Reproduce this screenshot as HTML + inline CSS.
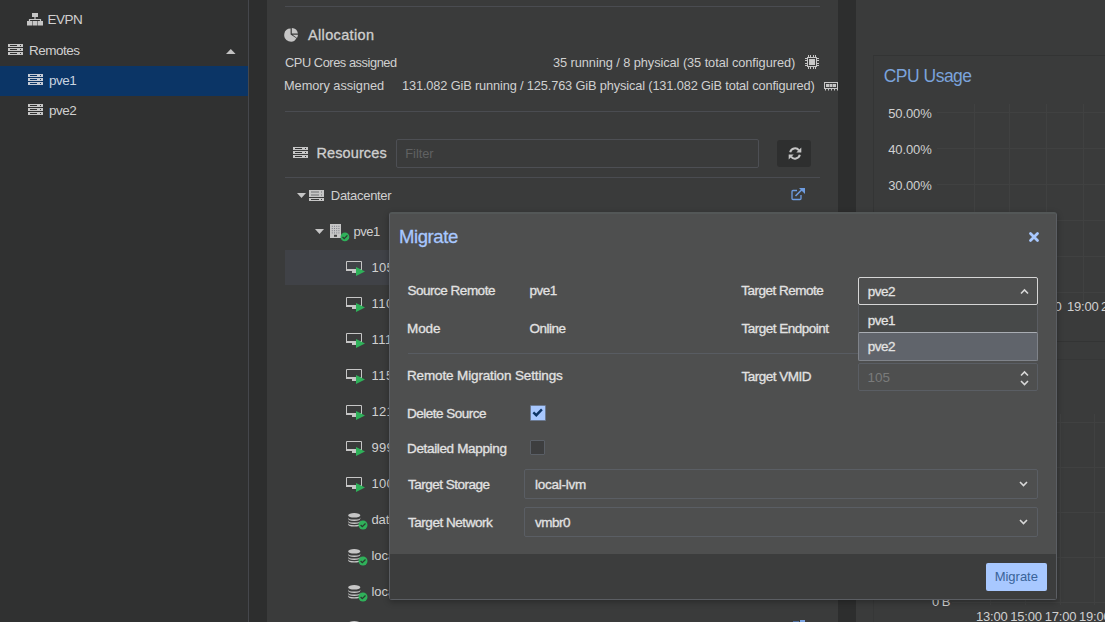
<!DOCTYPE html>
<html><head><meta charset="utf-8">
<style>
*{box-sizing:border-box;margin:0;padding:0}
html,body{width:1105px;height:622px;overflow:hidden;background:#3a3b3b;font-family:"Liberation Sans",sans-serif;position:relative}
.bx{position:absolute}
.ic{position:absolute;overflow:visible}
.tx{position:absolute;white-space:nowrap;line-height:1}
</style></head><body>
<div class="bx" style="left:0px;top:0px;width:248px;height:622px;background:#303131"></div>
<div class="bx" style="left:248px;top:0px;width:1px;height:622px;background:#45474c"></div>
<div class="bx" style="left:249px;top:0px;width:18px;height:622px;background:#2d2e2e"></div>
<div class="bx" style="left:267px;top:0px;width:571px;height:622px;background:#3a3b3b"></div>
<div class="bx" style="left:838px;top:0px;width:18px;height:622px;background:#2d2e2e"></div>
<div class="bx" style="left:856px;top:0px;width:249px;height:622px;background:#3a3b3b"></div>
<div class="bx" style="left:0px;top:66px;width:248px;height:30px;background:#0b3566"></div>
<svg class="ic" style="left:27px;top:12px" width="16" height="14" viewBox="0 0 16 14"><rect x="5" y="1" width="6" height="4" fill="#c6c6c6"/><path d="M8 5 V7.5 M2.5 9 V7.5 H13.5 V9" stroke="#c6c6c6" stroke-width="1.2" fill="none"/><rect x="0" y="9" width="5" height="4.5" fill="#c6c6c6"/><rect x="5.5" y="9" width="5" height="4.5" fill="#c6c6c6"/><rect x="11" y="9" width="5" height="4.5" fill="#c6c6c6"/></svg>
<svg class="ic" style="left:8px;top:44px" width="15" height="11" viewBox="0 0 15 11"><rect x="0" y="0" width="15" height="3" fill="#c6c6c6"/><rect x="2" y="1" width="7" height="1" fill="#303131"/><rect x="12" y="1" width="1" height="1" fill="#303131"/><rect x="0" y="4" width="15" height="3" fill="#c6c6c6"/><rect x="2" y="5" width="7" height="1" fill="#303131"/><rect x="12" y="5" width="1" height="1" fill="#303131"/><rect x="0" y="8" width="15" height="3" fill="#c6c6c6"/><rect x="2" y="9" width="7" height="1" fill="#303131"/><rect x="12" y="9" width="1" height="1" fill="#303131"/></svg>
<svg class="ic" style="left:27.5px;top:74px" width="15" height="11" viewBox="0 0 15 11"><rect x="0" y="0" width="15" height="3" fill="#c6ccd6"/><rect x="2" y="1" width="7" height="1" fill="#0b3566"/><rect x="12" y="1" width="1" height="1" fill="#0b3566"/><rect x="0" y="4" width="15" height="3" fill="#c6ccd6"/><rect x="2" y="5" width="7" height="1" fill="#0b3566"/><rect x="12" y="5" width="1" height="1" fill="#0b3566"/><rect x="0" y="8" width="15" height="3" fill="#c6ccd6"/><rect x="2" y="9" width="7" height="1" fill="#0b3566"/><rect x="12" y="9" width="1" height="1" fill="#0b3566"/></svg>
<svg class="ic" style="left:27.5px;top:104px" width="15" height="11" viewBox="0 0 15 11"><rect x="0" y="0" width="15" height="3" fill="#c6c6c6"/><rect x="2" y="1" width="7" height="1" fill="#303131"/><rect x="12" y="1" width="1" height="1" fill="#303131"/><rect x="0" y="4" width="15" height="3" fill="#c6c6c6"/><rect x="2" y="5" width="7" height="1" fill="#303131"/><rect x="12" y="5" width="1" height="1" fill="#303131"/><rect x="0" y="8" width="15" height="3" fill="#c6c6c6"/><rect x="2" y="9" width="7" height="1" fill="#303131"/><rect x="12" y="9" width="1" height="1" fill="#303131"/></svg>
<svg class="ic" style="left:226px;top:49px" width="10" height="5" viewBox="0 0 10 5"><path d="M0 5 L4.8 0 L9.6 5 Z" fill="#c2c2c2"/></svg>
<div class="bx" style="left:285px;top:6px;width:535px;height:1px;background:#4a4c51"></div>
<svg class="ic" style="left:284px;top:27.5px" width="15" height="14" viewBox="0 0 15 14"><path d="M6.6 0.6 A6.5 6.5 0 1 0 12.4 10.2 L6.6 6.5 Z" fill="#c6c6c6"/><path d="M7.8 0 A6.5 6.5 0 0 1 13.9 5.6 L7.8 5.6 Z" fill="#c6c6c6"/><path d="M8.6 6.8 L14 6.8 A6.5 6.5 0 0 1 13.0 9.9 Z" fill="#c6c6c6"/></svg>
<svg class="ic" style="left:805px;top:55px" width="14" height="14" viewBox="0 0 14 14"><rect x="2.5" y="2.5" width="9" height="9" stroke="#c6c6c6" stroke-width="1" fill="none"/><rect x="4" y="4" width="6" height="6" fill="#c6c6c6"/><rect x="3.0" y="0" width="1" height="2" fill="#c6c6c6"/><rect x="3.0" y="12" width="1" height="2" fill="#c6c6c6"/><rect x="0" y="3.0" width="2" height="1" fill="#c6c6c6"/><rect x="12" y="3.0" width="2" height="1" fill="#c6c6c6"/><rect x="5.0" y="0" width="1" height="2" fill="#c6c6c6"/><rect x="5.0" y="12" width="1" height="2" fill="#c6c6c6"/><rect x="0" y="5.0" width="2" height="1" fill="#c6c6c6"/><rect x="12" y="5.0" width="2" height="1" fill="#c6c6c6"/><rect x="8.0" y="0" width="1" height="2" fill="#c6c6c6"/><rect x="8.0" y="12" width="1" height="2" fill="#c6c6c6"/><rect x="0" y="8.0" width="2" height="1" fill="#c6c6c6"/><rect x="12" y="8.0" width="2" height="1" fill="#c6c6c6"/><rect x="10.0" y="0" width="1" height="2" fill="#c6c6c6"/><rect x="10.0" y="12" width="1" height="2" fill="#c6c6c6"/><rect x="0" y="10.0" width="2" height="1" fill="#c6c6c6"/><rect x="12" y="10.0" width="2" height="1" fill="#c6c6c6"/></svg>
<svg class="ic" style="left:824px;top:82px" width="15" height="9" viewBox="0 0 15 9"><rect x="0.5" y="0.5" width="13" height="6" stroke="#c6c6c6" stroke-width="1" fill="none"/><rect x="2" y="2" width="3" height="3" fill="#c6c6c6"/><rect x="5.5" y="2" width="3" height="3" fill="#c6c6c6"/><rect x="9" y="2" width="3" height="3" fill="#c6c6c6"/><rect x="1" y="7" width="1" height="1.5" fill="#c6c6c6"/><rect x="4" y="7" width="1" height="1.5" fill="#c6c6c6"/><rect x="7" y="7" width="1" height="1.5" fill="#c6c6c6"/><rect x="10" y="7" width="1" height="1.5" fill="#c6c6c6"/><rect x="13" y="7" width="1" height="1.5" fill="#c6c6c6"/></svg>
<div class="bx" style="left:285px;top:111px;width:535px;height:1px;background:#4a4c51"></div>
<svg class="ic" style="left:293px;top:147px" width="15" height="11" viewBox="0 0 15 11"><rect x="0" y="0" width="15" height="3" fill="#c6c6c6"/><rect x="2" y="1" width="7" height="1" fill="#303131"/><rect x="12" y="1" width="1" height="1" fill="#303131"/><rect x="0" y="4" width="15" height="3" fill="#c6c6c6"/><rect x="2" y="5" width="7" height="1" fill="#303131"/><rect x="12" y="5" width="1" height="1" fill="#303131"/><rect x="0" y="8" width="15" height="3" fill="#c6c6c6"/><rect x="2" y="9" width="7" height="1" fill="#303131"/><rect x="12" y="9" width="1" height="1" fill="#303131"/></svg>
<div class="bx" style="left:396px;top:139px;width:363px;height:29px;border:1px solid #4d4f54;border-radius:2px;background:#3a3b3b"></div>
<div class="bx" style="left:777px;top:140px;width:34px;height:27px;background:#2e2f2f;border-radius:3px"></div>
<svg class="ic" style="left:787.5px;top:147px" width="14" height="13" viewBox="0 0 14 13"><path d="M2.2 5.2 A5 5 0 0 1 11 3.3" stroke="#c6c6c6" stroke-width="2" fill="none"/><path d="M13.3 0.5 V5.5 H8.3 Z" fill="#c6c6c6"/><path d="M11.8 7.8 A5 5 0 0 1 3 9.7" stroke="#c6c6c6" stroke-width="2" fill="none"/><path d="M0.7 12.5 V7.5 H5.7 Z" fill="#c6c6c6"/></svg>
<div class="bx" style="left:285px;top:177px;width:535px;height:1px;background:#4a4c51"></div>
<svg class="ic" style="left:297px;top:193px" width="9" height="5" viewBox="0 0 9 5"><path d="M0 0 H9 L4.5 5 Z" fill="#c6c6c6"/></svg>
<svg class="ic" style="left:309px;top:189.5px" width="15" height="11" viewBox="0 0 15 11"><rect x="0" y="0" width="15" height="7" fill="#c6c6c6"/><rect x="2" y="1.5" width="8" height="1" fill="#6d6e70"/><rect x="2" y="4.5" width="8" height="1" fill="#6d6e70"/><rect x="12" y="1.5" width="1" height="1" fill="#6d6e70"/><rect x="12" y="4.5" width="1" height="1" fill="#6d6e70"/><rect x="0" y="8" width="15" height="3" fill="#c6c6c6"/><rect x="2" y="9" width="8" height="1" fill="#3a3b3b"/><rect x="12" y="9" width="1" height="1" fill="#3a3b3b"/></svg>
<svg class="ic" style="left:791px;top:188px" width="14" height="13" viewBox="0 0 14 13"><path d="M6 2.5 H2 Q1 2.5 1 3.5 V10.5 Q1 11.5 2 11.5 H9 Q10 11.5 10 10.5 V7" stroke="#6e9ce0" stroke-width="1.3" fill="none"/><path d="M4.5 8 L11 1.5" stroke="#6e9ce0" stroke-width="1.6"/><path d="M8 0 H14 V6 Z" fill="#6e9ce0"/></svg>
<svg class="ic" style="left:315px;top:229px" width="9" height="5" viewBox="0 0 9 5"><path d="M0 0 H9 L4.5 5 Z" fill="#c6c6c6"/></svg>
<svg class="ic" style="left:330px;top:224px" width="11" height="14" viewBox="0 0 11 14"><rect x="0" y="0" width="11" height="14" fill="#c6c6c6"/><rect x="1.8" y="1.8" width="1" height="1" fill="#7a7c85"/><rect x="4.0" y="1.8" width="1" height="1" fill="#7a7c85"/><rect x="6.2" y="1.8" width="1" height="1" fill="#7a7c85"/><rect x="8.4" y="1.8" width="1" height="1" fill="#7a7c85"/><rect x="1.8" y="4.0" width="1" height="1" fill="#7a7c85"/><rect x="4.0" y="4.0" width="1" height="1" fill="#7a7c85"/><rect x="6.2" y="4.0" width="1" height="1" fill="#7a7c85"/><rect x="8.4" y="4.0" width="1" height="1" fill="#7a7c85"/><rect x="1.8" y="6.2" width="1" height="1" fill="#7a7c85"/><rect x="4.0" y="6.2" width="1" height="1" fill="#7a7c85"/><rect x="6.2" y="6.2" width="1" height="1" fill="#7a7c85"/><rect x="8.4" y="6.2" width="1" height="1" fill="#7a7c85"/><rect x="1.8" y="8.4" width="1" height="1" fill="#7a7c85"/><rect x="4.0" y="8.4" width="1" height="1" fill="#7a7c85"/><rect x="6.2" y="8.4" width="1" height="1" fill="#7a7c85"/><rect x="8.4" y="8.4" width="1" height="1" fill="#7a7c85"/><rect x="4" y="10.8" width="3" height="2" fill="#444"/></svg>
<svg class="ic" style="left:339.70000000000005px;top:231.5px" width="9.8" height="9.8" viewBox="-4.9 -4.9 9.8 9.8"><circle cx="0" cy="0" r="4.4" fill="#2fb15a"/><path d="M-2.4 0 L-0.7 1.7 L2.5 -1.5" stroke="#2b3b30" stroke-width="1.3" fill="none"/></svg>
<div class="bx" style="left:285px;top:250px;width:104px;height:35px;background:#404247"></div>
<svg class="ic" style="left:346px;top:260px" width="20" height="17" viewBox="0 0 20 17"><path d="M0.5 1.5 H15.5 V10.5 H0.5 Z" stroke="#c6c6c6" stroke-width="1" fill="none"/><rect x="0" y="9" width="16" height="2" fill="#c6c6c6"/><rect x="6" y="11" width="4" height="2" fill="#c6c6c6"/><path d="M10 7 L19 11.5 L10 16 Z" fill="#2fb15a"/></svg>
<svg class="ic" style="left:346px;top:296px" width="20" height="17" viewBox="0 0 20 17"><path d="M0.5 1.5 H15.5 V10.5 H0.5 Z" stroke="#c6c6c6" stroke-width="1" fill="none"/><rect x="0" y="9" width="16" height="2" fill="#c6c6c6"/><rect x="6" y="11" width="4" height="2" fill="#c6c6c6"/><path d="M10 7 L19 11.5 L10 16 Z" fill="#2fb15a"/></svg>
<svg class="ic" style="left:346px;top:332px" width="20" height="17" viewBox="0 0 20 17"><path d="M0.5 1.5 H15.5 V10.5 H0.5 Z" stroke="#c6c6c6" stroke-width="1" fill="none"/><rect x="0" y="9" width="16" height="2" fill="#c6c6c6"/><rect x="6" y="11" width="4" height="2" fill="#c6c6c6"/><path d="M10 7 L19 11.5 L10 16 Z" fill="#2fb15a"/></svg>
<svg class="ic" style="left:346px;top:368px" width="20" height="17" viewBox="0 0 20 17"><path d="M0.5 1.5 H15.5 V10.5 H0.5 Z" stroke="#c6c6c6" stroke-width="1" fill="none"/><rect x="0" y="9" width="16" height="2" fill="#c6c6c6"/><rect x="6" y="11" width="4" height="2" fill="#c6c6c6"/><path d="M10 7 L19 11.5 L10 16 Z" fill="#2fb15a"/></svg>
<svg class="ic" style="left:346px;top:404px" width="20" height="17" viewBox="0 0 20 17"><path d="M0.5 1.5 H15.5 V10.5 H0.5 Z" stroke="#c6c6c6" stroke-width="1" fill="none"/><rect x="0" y="9" width="16" height="2" fill="#c6c6c6"/><rect x="6" y="11" width="4" height="2" fill="#c6c6c6"/><path d="M10 7 L19 11.5 L10 16 Z" fill="#2fb15a"/></svg>
<svg class="ic" style="left:346px;top:440px" width="20" height="17" viewBox="0 0 20 17"><path d="M0.5 1.5 H15.5 V10.5 H0.5 Z" stroke="#c6c6c6" stroke-width="1" fill="none"/><rect x="0" y="9" width="16" height="2" fill="#c6c6c6"/><rect x="6" y="11" width="4" height="2" fill="#c6c6c6"/><path d="M10 7 L19 11.5 L10 16 Z" fill="#2fb15a"/></svg>
<svg class="ic" style="left:346px;top:476px" width="20" height="17" viewBox="0 0 20 17"><path d="M0.5 1.5 H15.5 V10.5 H0.5 Z" stroke="#c6c6c6" stroke-width="1" fill="none"/><rect x="0" y="9" width="16" height="2" fill="#c6c6c6"/><rect x="6" y="11" width="4" height="2" fill="#c6c6c6"/><path d="M10 7 L19 11.5 L10 16 Z" fill="#2fb15a"/></svg>
<svg class="ic" style="left:348px;top:512.5px" width="13" height="14" viewBox="0 0 13 14"><ellipse cx="6.25" cy="2.3" rx="6.1" ry="2.3" fill="#c6c6c6"/><path d="M0.15 4.3999999999999995 Q0.15 6.6 6.25 6.6 Q12.35 6.6 12.35 4.3999999999999995 V5.6 Q12.35 8.0 6.25 8.0 Q0.15 8.0 0.15 5.6 Z" fill="#c6c6c6"/><path d="M0.15 7.3999999999999995 Q0.15 9.6 6.25 9.6 Q12.35 9.6 12.35 7.3999999999999995 V8.6 Q12.35 11.0 6.25 11.0 Q0.15 11.0 0.15 8.6 Z" fill="#c6c6c6"/><path d="M0.15 10.0 Q0.15 12.2 6.25 12.2 Q12.35 12.2 12.35 10.0 V11.2 Q12.35 13.6 6.25 13.6 Q0.15 13.6 0.15 11.2 Z" fill="#c6c6c6"/></svg>
<svg class="ic" style="left:357.5px;top:519.5px" width="10.0" height="10.0" viewBox="-5.0 -5.0 10.0 10.0"><circle cx="0" cy="0" r="4.5" fill="#2fb15a"/><path d="M-2.4 0 L-0.7 1.7 L2.5 -1.5" stroke="#2b3b30" stroke-width="1.3" fill="none"/></svg>
<svg class="ic" style="left:348px;top:548.5px" width="13" height="14" viewBox="0 0 13 14"><ellipse cx="6.25" cy="2.3" rx="6.1" ry="2.3" fill="#c6c6c6"/><path d="M0.15 4.3999999999999995 Q0.15 6.6 6.25 6.6 Q12.35 6.6 12.35 4.3999999999999995 V5.6 Q12.35 8.0 6.25 8.0 Q0.15 8.0 0.15 5.6 Z" fill="#c6c6c6"/><path d="M0.15 7.3999999999999995 Q0.15 9.6 6.25 9.6 Q12.35 9.6 12.35 7.3999999999999995 V8.6 Q12.35 11.0 6.25 11.0 Q0.15 11.0 0.15 8.6 Z" fill="#c6c6c6"/><path d="M0.15 10.0 Q0.15 12.2 6.25 12.2 Q12.35 12.2 12.35 10.0 V11.2 Q12.35 13.6 6.25 13.6 Q0.15 13.6 0.15 11.2 Z" fill="#c6c6c6"/></svg>
<svg class="ic" style="left:357.5px;top:555.5px" width="10.0" height="10.0" viewBox="-5.0 -5.0 10.0 10.0"><circle cx="0" cy="0" r="4.5" fill="#2fb15a"/><path d="M-2.4 0 L-0.7 1.7 L2.5 -1.5" stroke="#2b3b30" stroke-width="1.3" fill="none"/></svg>
<svg class="ic" style="left:348px;top:584.5px" width="13" height="14" viewBox="0 0 13 14"><ellipse cx="6.25" cy="2.3" rx="6.1" ry="2.3" fill="#c6c6c6"/><path d="M0.15 4.3999999999999995 Q0.15 6.6 6.25 6.6 Q12.35 6.6 12.35 4.3999999999999995 V5.6 Q12.35 8.0 6.25 8.0 Q0.15 8.0 0.15 5.6 Z" fill="#c6c6c6"/><path d="M0.15 7.3999999999999995 Q0.15 9.6 6.25 9.6 Q12.35 9.6 12.35 7.3999999999999995 V8.6 Q12.35 11.0 6.25 11.0 Q0.15 11.0 0.15 8.6 Z" fill="#c6c6c6"/><path d="M0.15 10.0 Q0.15 12.2 6.25 12.2 Q12.35 12.2 12.35 10.0 V11.2 Q12.35 13.6 6.25 13.6 Q0.15 13.6 0.15 11.2 Z" fill="#c6c6c6"/></svg>
<svg class="ic" style="left:357.5px;top:591.5px" width="10.0" height="10.0" viewBox="-5.0 -5.0 10.0 10.0"><circle cx="0" cy="0" r="4.5" fill="#2fb15a"/><path d="M-2.4 0 L-0.7 1.7 L2.5 -1.5" stroke="#2b3b30" stroke-width="1.3" fill="none"/></svg>
<svg class="ic" style="left:348px;top:620.5px" width="13" height="14" viewBox="0 0 13 14"><ellipse cx="6.25" cy="2.3" rx="6.1" ry="2.3" fill="#c6c6c6"/><path d="M0.15 4.3999999999999995 Q0.15 6.6 6.25 6.6 Q12.35 6.6 12.35 4.3999999999999995 V5.6 Q12.35 8.0 6.25 8.0 Q0.15 8.0 0.15 5.6 Z" fill="#c6c6c6"/><path d="M0.15 7.3999999999999995 Q0.15 9.6 6.25 9.6 Q12.35 9.6 12.35 7.3999999999999995 V8.6 Q12.35 11.0 6.25 11.0 Q0.15 11.0 0.15 8.6 Z" fill="#c6c6c6"/><path d="M0.15 10.0 Q0.15 12.2 6.25 12.2 Q12.35 12.2 12.35 10.0 V11.2 Q12.35 13.6 6.25 13.6 Q0.15 13.6 0.15 11.2 Z" fill="#c6c6c6"/></svg>
<div class="bx" style="left:793px;top:620.5px;width:6px;height:1.5px;background:#4d6c9c"></div>
<div class="bx" style="left:800px;top:620px;width:5px;height:2px;background:#7aa2e0"></div>
<div class="bx" style="left:873px;top:55px;width:240px;height:287px;border-left:1px solid #343535;border-top:1px solid #333434;border-bottom:1px solid #333434"></div>
<div class="bx" style="left:937px;top:112px;width:170px;height:1px;background:#404141"></div>
<div class="bx" style="left:937px;top:148px;width:170px;height:1px;background:#404141"></div>
<div class="bx" style="left:937px;top:184px;width:170px;height:1px;background:#404141"></div>
<div class="bx" style="left:937px;top:220px;width:170px;height:1px;background:#404141"></div>
<div class="bx" style="left:937px;top:256px;width:170px;height:1px;background:#404141"></div>
<div class="bx" style="left:937px;top:292px;width:170px;height:1px;background:#404141"></div>
<div class="bx" style="left:974px;top:104px;width:1px;height:200px;background:#404141"></div>
<div class="bx" style="left:1009px;top:104px;width:1px;height:200px;background:#404141"></div>
<div class="bx" style="left:1046px;top:104px;width:1px;height:200px;background:#404141"></div>
<div class="bx" style="left:1083px;top:104px;width:1px;height:200px;background:#404141"></div>
<div class="bx" style="left:873px;top:359px;width:240px;height:270px;border-left:1px solid #363737;border-top:1px solid #363737"></div>
<div class="bx" style="left:952px;top:422px;width:160px;height:1px;background:#404141"></div>
<div class="bx" style="left:952px;top:467px;width:160px;height:1px;background:#404141"></div>
<div class="bx" style="left:952px;top:512px;width:160px;height:1px;background:#404141"></div>
<div class="bx" style="left:952px;top:557px;width:160px;height:1px;background:#404141"></div>
<div class="bx" style="left:952px;top:602px;width:160px;height:1px;background:#404141"></div>
<div class="bx" style="left:990px;top:414px;width:1px;height:191px;background:#404141"></div>
<div class="bx" style="left:1025px;top:414px;width:1px;height:191px;background:#404141"></div>
<div class="bx" style="left:1060px;top:414px;width:1px;height:191px;background:#404141"></div>
<div class="bx" style="left:1094px;top:414px;width:1px;height:191px;background:#404141"></div>
<div class="tx" style="left:47.50px;top:13px;font-size:13.5px;color:#d0d0d0;letter-spacing:-0.500px">EVPN</div>
<div class="tx" style="left:29.00px;top:44px;font-size:13.5px;color:#d0d0d0;letter-spacing:-0.500px">Remotes</div>
<div class="tx" style="left:48.90px;top:74px;font-size:13.5px;color:#c9d3e0;letter-spacing:-0.500px">pve1</div>
<div class="tx" style="left:48.90px;top:104px;font-size:13.5px;color:#d0d0d0;letter-spacing:-0.500px">pve2</div>
<div class="tx" style="left:308.00px;top:28px;font-size:14.5px;color:#cfcfcf;-webkit-text-stroke:0.3px #cfcfcf;letter-spacing:0.355px">Allocation</div>
<div class="tx" style="left:285.00px;top:57px;font-size:12.8px;color:#d0d0d0;letter-spacing:-0.434px">CPU Cores assigned</div>
<div class="tx" style="left:553.00px;top:57px;font-size:12.8px;color:#d0d0d0;letter-spacing:-0.072px">35 running / 8 physical (35 total configured)</div>
<div class="tx" style="left:284.00px;top:80px;font-size:12.8px;color:#d0d0d0;letter-spacing:-0.063px">Memory assigned</div>
<div class="tx" style="left:402.00px;top:80px;font-size:12.8px;color:#d0d0d0;letter-spacing:-0.146px">131.082 GiB running / 125.763 GiB physical (131.082 GiB total configured)</div>
<div class="tx" style="left:316.40px;top:146px;font-size:14.5px;color:#cfcfcf;-webkit-text-stroke:0.3px #cfcfcf;letter-spacing:0.118px">Resources</div>
<div class="tx" style="left:405.30px;top:148px;font-size:12.8px;color:#606162;letter-spacing:-0.035px">Filter</div>
<div class="tx" style="left:330.80px;top:189px;font-size:13px;color:#d0d0d0;letter-spacing:-0.307px">Datacenter</div>
<div class="tx" style="left:353.50px;top:225px;font-size:13px;color:#d0d0d0;letter-spacing:-0.500px">pve1</div>
<div class="tx" style="left:371.40px;top:261px;font-size:13px;color:#d0d0d0;letter-spacing:0.270px">105</div>
<div class="tx" style="left:371.40px;top:297px;font-size:13px;color:#d0d0d0;letter-spacing:0.500px">110</div>
<div class="tx" style="left:371.40px;top:333px;font-size:13px;color:#d0d0d0;letter-spacing:0.500px">111</div>
<div class="tx" style="left:371.40px;top:369px;font-size:13px;color:#d0d0d0;letter-spacing:0.500px">115</div>
<div class="tx" style="left:371.40px;top:405px;font-size:13px;color:#d0d0d0;letter-spacing:0.270px">121</div>
<div class="tx" style="left:371.40px;top:441px;font-size:13px;color:#d0d0d0;letter-spacing:0.270px">999</div>
<div class="tx" style="left:371.40px;top:477px;font-size:13px;color:#d0d0d0;letter-spacing:0.270px">100</div>
<div class="tx" style="left:371.40px;top:513px;font-size:13px;color:#d0d0d0">data</div>
<div class="tx" style="left:371.40px;top:549px;font-size:13px;color:#d0d0d0">local</div>
<div class="tx" style="left:371.40px;top:585px;font-size:13px;color:#d0d0d0">local</div>
<div class="tx" style="left:883.70px;top:68px;font-size:17.5px;color:#7ba3db;letter-spacing:-0.500px">CPU Usage</div>
<div class="tx" style="left:888.20px;top:107px;font-size:13px;color:#d0d0d0;letter-spacing:-0.106px">50.00%</div>
<div class="tx" style="left:888.20px;top:143px;font-size:13px;color:#d0d0d0;letter-spacing:-0.106px">40.00%</div>
<div class="tx" style="left:888.20px;top:179px;font-size:13px;color:#d0d0d0;letter-spacing:-0.106px">30.00%</div>
<div class="tx" style="left:932.00px;top:595px;font-size:13px;color:#d0d0d0;letter-spacing:-0.500px">0 B</div>
<div class="tx" style="left:976.00px;top:610px;font-size:13px;color:#d0d0d0;letter-spacing:-0.200px">13:00</div>
<div class="tx" style="left:1010.30px;top:610px;font-size:13px;color:#d0d0d0;letter-spacing:-0.200px">15:00</div>
<div class="tx" style="left:1044.70px;top:610px;font-size:13px;color:#d0d0d0;letter-spacing:-0.200px">17:00</div>
<div class="tx" style="left:1079.00px;top:610px;font-size:13px;color:#d0d0d0;letter-spacing:-0.200px">19:00</div>
<div class="tx" style="left:1030.00px;top:300px;font-size:13px;color:#d0d0d0;letter-spacing:-0.200px">17:00</div>
<div class="tx" style="left:1067.00px;top:300px;font-size:13px;color:#d0d0d0;letter-spacing:-0.200px">19:00</div>
<div class="tx" style="left:1101.00px;top:300px;font-size:13px;color:#d0d0d0;letter-spacing:-0.200px">21:00</div>
<div class="bx" style="left:389px;top:212px;width:668px;height:388px;background:#4e4f4f;border:1px solid #5b5e63;border-top:2px solid #535757;border-radius:3px;box-shadow:0 2px 6px rgba(0,0,0,.3)"></div>
<div class="bx" style="left:390px;top:554px;width:666px;height:45px;background:#3c3d3d"></div>
<svg class="ic" style="left:1028.5px;top:231.5px" width="10" height="10" viewBox="0 0 10 10"><path d="M1.5 1.5 L8.5 8.5 M8.5 1.5 L1.5 8.5" stroke="#a8c8ff" stroke-width="2.8" stroke-linecap="round"/></svg>
<div class="bx" style="left:408px;top:353px;width:629px;height:1px;background:#585c62"></div>
<div class="bx" style="left:858px;top:305px;width:180px;height:56px;background:#474949;border-left:1px solid #585b60;border-right:1px solid #5a5d62"></div>
<div class="bx" style="left:858px;top:332px;width:180px;height:29px;background:#60646b;border:1px solid #7f838a;border-top-color:#a9adb3;border-radius:2px"></div>
<div class="bx" style="left:858px;top:277px;width:180px;height:28px;border:1px solid #d6d6d6;border-radius:2px"></div>
<svg class="ic" style="left:1019.5px;top:288.5px" width="9" height="6" viewBox="0 0 9 6"><path d="M1 4.5 L4.5 1 L8 4.5" stroke="#d8d8d8" stroke-width="1.6" fill="none"/></svg>
<div class="bx" style="left:858px;top:363px;width:180px;height:28px;border:1px solid #5a5e64;border-radius:2px"></div>
<svg class="ic" style="left:1019.5px;top:371px" width="9" height="6" viewBox="0 0 9 6"><path d="M1 4.5 L4.5 1 L8 4.5" stroke="#d8d8d8" stroke-width="1.6" fill="none"/></svg>
<svg class="ic" style="left:1019.5px;top:379.5px" width="9" height="6" viewBox="0 0 9 6"><path d="M1 1 L4.5 4.5 L8 1" stroke="#d8d8d8" stroke-width="1.6" fill="none"/></svg>
<div class="bx" style="left:529.5px;top:405px;width:16px;height:16px;background:#a8c8ff;border:1px solid #6b7a92;border-radius:1px"></div>
<svg class="ic" style="left:531px;top:406px" width="13" height="13" viewBox="0 0 13 13"><path d="M2.3 6.4 L5.3 9.2 L10.9 3.4" stroke="#0d3566" stroke-width="2.4" fill="none"/></svg>
<div class="bx" style="left:530px;top:440px;width:15px;height:15px;background:#3d3e3f;border:1px solid #5a5f66;border-radius:1px"></div>
<div class="bx" style="left:524px;top:469px;width:514px;height:30px;border:1px solid #5a5e64;border-radius:2px"></div>
<svg class="ic" style="left:1019px;top:480.5px" width="9" height="6" viewBox="0 0 9 6"><path d="M1 1 L4.5 4.5 L8 1" stroke="#d8d8d8" stroke-width="1.6" fill="none"/></svg>
<div class="bx" style="left:524px;top:507px;width:514px;height:30px;border:1px solid #5a5e64;border-radius:2px"></div>
<svg class="ic" style="left:1019px;top:518.5px" width="9" height="6" viewBox="0 0 9 6"><path d="M1 1 L4.5 4.5 L8 1" stroke="#d8d8d8" stroke-width="1.6" fill="none"/></svg>
<div class="bx" style="left:986px;top:563px;width:61px;height:28px;background:#a8c8ff;border-radius:2px"></div>
<div class="tx" style="left:399.00px;top:228px;font-size:18.5px;color:#a8c8ff;-webkit-text-stroke:0.3px #a8c8ff;letter-spacing:-0.400px">Migrate</div>
<div class="tx" style="left:407.60px;top:284px;font-size:13.5px;color:#e2e2e2;-webkit-text-stroke:0.3px #e2e2e2;letter-spacing:-0.500px">Source Remote</div>
<div class="tx" style="left:529.40px;top:284px;font-size:13.5px;color:#e2e2e2;-webkit-text-stroke:0.3px #e2e2e2;letter-spacing:-0.500px">pve1</div>
<div class="tx" style="left:407.00px;top:322px;font-size:13.5px;color:#e2e2e2;-webkit-text-stroke:0.3px #e2e2e2;letter-spacing:-0.087px">Mode</div>
<div class="tx" style="left:529.40px;top:322px;font-size:13.5px;color:#e2e2e2;-webkit-text-stroke:0.3px #e2e2e2;letter-spacing:-0.500px">Online</div>
<div class="tx" style="left:741.30px;top:284px;font-size:13.5px;color:#e2e2e2;-webkit-text-stroke:0.3px #e2e2e2;letter-spacing:-0.500px">Target Remote</div>
<div class="tx" style="left:741.50px;top:322px;font-size:13.5px;color:#e2e2e2;-webkit-text-stroke:0.3px #e2e2e2;letter-spacing:-0.500px">Target Endpoint</div>
<div class="tx" style="left:407.00px;top:369px;font-size:13.5px;color:#e2e2e2;-webkit-text-stroke:0.3px #e2e2e2;letter-spacing:-0.138px">Remote Migration Settings</div>
<div class="tx" style="left:741.50px;top:370px;font-size:13.5px;color:#e2e2e2;-webkit-text-stroke:0.3px #e2e2e2;letter-spacing:-0.500px">Target VMID</div>
<div class="tx" style="left:407.00px;top:407px;font-size:13.5px;color:#e2e2e2;-webkit-text-stroke:0.3px #e2e2e2;letter-spacing:-0.500px">Delete Source</div>
<div class="tx" style="left:407.00px;top:442px;font-size:13.5px;color:#e2e2e2;-webkit-text-stroke:0.3px #e2e2e2;letter-spacing:-0.344px">Detailed Mapping</div>
<div class="tx" style="left:408.00px;top:478px;font-size:13.5px;color:#e2e2e2;-webkit-text-stroke:0.3px #e2e2e2;letter-spacing:-0.500px">Target Storage</div>
<div class="tx" style="left:408.00px;top:516px;font-size:13.5px;color:#e2e2e2;-webkit-text-stroke:0.3px #e2e2e2;letter-spacing:-0.464px">Target Network</div>
<div class="tx" style="left:535.00px;top:478px;font-size:13.5px;color:#e2e2e2;-webkit-text-stroke:0.3px #e2e2e2;letter-spacing:-0.251px">local-lvm</div>
<div class="tx" style="left:535.00px;top:516px;font-size:13.5px;color:#e2e2e2;-webkit-text-stroke:0.3px #e2e2e2;letter-spacing:-0.500px">vmbr0</div>
<div class="tx" style="left:867.80px;top:285px;font-size:13.5px;color:#e2e2e2;-webkit-text-stroke:0.3px #e2e2e2;letter-spacing:-0.500px">pve2</div>
<div class="tx" style="left:867.80px;top:314px;font-size:13.5px;color:#e2e2e2;-webkit-text-stroke:0.3px #e2e2e2;letter-spacing:-0.500px">pve1</div>
<div class="tx" style="left:867.80px;top:340px;font-size:13.5px;color:#e2e2e2;-webkit-text-stroke:0.3px #e2e2e2;letter-spacing:-0.500px">pve2</div>
<div class="tx" style="left:867.60px;top:371px;font-size:13.5px;color:#7a7b7b">105</div>
<div class="tx" style="left:994.70px;top:570px;font-size:13px;color:#3a6399;letter-spacing:-0.020px">Migrate</div>
</body></html>
